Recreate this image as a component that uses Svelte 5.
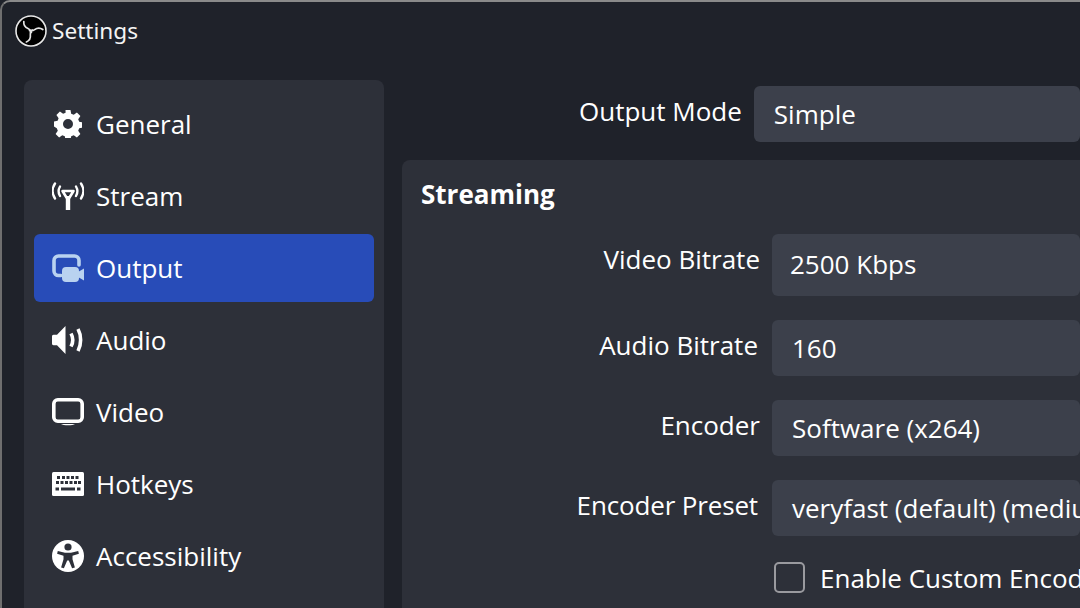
<script>
  const navItems = [
    { label: "General", icon: "gear" },
    { label: "Stream", icon: "antenna" },
    { label: "Output", icon: "output", active: true },
    { label: "Audio", icon: "speaker" },
    { label: "Video", icon: "monitor" },
    { label: "Hotkeys", icon: "keyboard" },
    { label: "Accessibility", icon: "person" }
  ];

  const fields = [
    { label: "Video Bitrate", value: "2500 Kbps", kind: "bitrate" },
    { label: "Audio Bitrate", value: "160", kind: "audio" },
    { label: "Encoder", value: "Software (x264)", kind: "encoder" },
    { label: "Encoder Preset", value: "veryfast (default) (medium CPU usage)", kind: "preset" }
  ];

  const armAngles = [0, 120, 240];
</script>

<div class="window">
  <header class="titlebar">
    <svg class="logo" viewBox="0 0 32 32" width="32" height="32">
      <circle cx="16" cy="16" r="15" fill="#000" stroke="#e8e8e8" stroke-width="1.600" />
      {#each armAngles as angle}
        <path
          transform="rotate({angle} 16 16)"
          d="M8.800 6.500C8.500 10 10.500 12.500 13 13.500 15 14.300 16 15.500 16.400 17.500"
          fill="none"
          stroke="#e4e4e4"
          stroke-width="1.700"
          stroke-linecap="round"
        />
      {/each}
    </svg>
    <span class="title">Settings</span>
  </header>

  <div class="body">
    <nav class="sidebar">
      {#each navItems as item}
        <div class="nav-item" class:active={item.active}>
          <span class="nav-icon">
            {#if item.icon === "gear"}
              <svg viewBox="0 0 28 28" width="28" height="28">
                <path fill-rule="evenodd" fill="#fff" d="M11.500 0h5l.7 3.800 2.500 1 3.200-2.200 3.500 3.500-2.200 3.200 1 2.500 3.800.7v5l-3.800.7-1 2.500 2.200 3.200-3.500 3.500-3.200-2.200-2.500 1-.7 3.800h-5l-.7-3.800-2.500-1-3.200 2.200-3.500-3.500 2.200-3.200-1-2.500L-.2 16.500v-5l3.800-.7 1-2.500L2.400 5.100 5.900 1.600l3.200 2.200 2.500-1zM14 9a5 5 0 1 0 0 10 5 5 0 0 0 0-10z" />
              </svg>
            {:else if item.icon === "antenna"}
              <svg viewBox="0 0 32 28" width="32" height="28" fill="none" stroke="#fff" stroke-linecap="round">
                <path d="M10.500 9h11l-4 6.500h-3z" stroke-width="2.600" stroke-linejoin="round" />
                <path d="M16 14v14" stroke-width="4.400" stroke-linecap="butt" />
                <path d="M8 4.500c-1.800 3-1.800 6.500 0 9.500" stroke-width="2.400" />
                <path d="M3 1.500c-3 4.500-3 10.500 0 15" stroke-width="2.400" />
                <path d="M24 4.500c1.800 3 1.800 6.500 0 9.500" stroke-width="2.400" />
                <path d="M29 1.500c3 4.500 3 10.500 0 15" stroke-width="2.400" />
              </svg>
            {:else if item.icon === "output"}
              <svg viewBox="0 0 32 28" width="32" height="28">
                <path d="M9 21.500H6.500a4.500 4.500 0 0 1-4.500-4.500V6.500A4.500 4.500 0 0 1 6.500 2h16A4.500 4.500 0 0 1 27 6.500V11" fill="none" stroke="#b9d2f0" stroke-width="3.600" stroke-linecap="round" />
                <rect x="10" y="13" width="17" height="15" rx="4" fill="#b9d2f0" />
                <path d="M26 18l6-3.500v12L26 23z" fill="#b9d2f0" />
              </svg>
            {:else if item.icon === "speaker"}
              <svg viewBox="0 0 32 28" width="32" height="28" fill="none" stroke="#fff">
                <path d="M0 10.500c0-1 .6-1.700 1.500-1.700H5L13.500 0v28L5 19.200H1.500C.6 19.200 0 18.500 0 17.500z" fill="#fff" stroke="none" />
                <path d="M19 7.500c2.200 4 2.200 9 0 13" stroke-width="3.600" />
                <path d="M26 3c3.500 6.500 3.500 15.500 0 22" stroke-width="3.600" />
              </svg>
            {:else if item.icon === "monitor"}
              <svg viewBox="0 0 32 28" width="32" height="28" fill="none">
                <rect x="1.800" y="1.800" width="28.400" height="21.400" rx="4" stroke="#fff" stroke-width="3.600" />
                <path d="M9 26h14c-2 1.800-12 1.800-14 0z" fill="#fff" />
              </svg>
            {:else if item.icon === "keyboard"}
              <svg viewBox="0 0 32 24" width="32" height="24">
                <rect width="32" height="24" rx="1.500" fill="#fff" />
                <path fill="#2d3039" d="M5 4h3v3H5zM10 4h3v3h-3zM14.500 4h3v3h-3zM19 4h3v3h-3zM23.500 4h3v3h-3zM4 9h3v3H4zM8.500 9h3v3h-3zM13 9h3v3h-3zM17.500 9h3v3h-3zM22 9h3v3h-3zM26 9h3v3h-3zM3.500 15.500h3.500v3H3.500zM9 15.500h14v3H9zM25 15.500h3.500v3H25z" />
              </svg>
            {:else if item.icon === "person"}
              <svg viewBox="0 0 32 32" width="32" height="32">
                <circle cx="16" cy="16" r="16" fill="#fff" />
                <circle cx="16" cy="7" r="3.600" fill="#2d3039" />
                <path d="M5.800 11l7.200 1.800h6l7.200-1.800.7 2.800-6.400 2v3.400l2.400 8.300-2.800.7-3.300-7.800h-1.600l-3.300 7.800-2.800-.7 2.400-8.300v-3.400l-6.400-2z" fill="#2d3039" />
              </svg>
            {/if}
          </span>
          <span class="nav-label">{item.label}</span>
        </div>
      {/each}
    </nav>

    <main class="content">
      <div class="mode-row">
        <span class="mode-label">Output Mode</span>
        <div class="combo mode-combo">Simple</div>
      </div>

      <section class="panel">
        <h2>Streaming</h2>
        <div class="fields">
          {#each fields as field}
            <div class="field field-{field.kind}">
              <span class="field-label">{field.label}</span>
              <div class="combo">{field.value}</div>
            </div>
          {/each}
          <label class="check-row">
            <span class="checkbox"></span>
            <span>Enable Custom Encoder Settings</span>
          </label>
        </div>
      </section>
    </main>
  </div>
</div>

<style>
  :global(body) {
    margin: 0;
    background: #1f222a;
    overflow: hidden;
  }
  .window {
    width: 1080px;
    height: 608px;
    box-sizing: border-box;
    background: #1f222a;
    border-top: 2px solid #8a8a8a;
    border-left: 2px solid #6f6f6f;
    border-top-left-radius: 10px;
    color: #fff;
    font-family: "Open Sans", sans-serif;
    font-size: 26px;
    overflow: hidden;
  }
  .titlebar {
    display: flex;
    align-items: center;
    gap: 5px;
    height: 58px;
    padding-left: 13px;
  }
  .logo {
    flex: none;
  }
  .title {
    margin-top: -2px;
    font-family: "Noto Sans", sans-serif;
    font-size: 22.600px;
    color: #f4f4f4;
  }
  .body {
    display: flex;
    align-items: flex-start;
    gap: 18px;
    padding: 20px 0 0 22px;
  }
  .sidebar {
    flex: none;
    box-sizing: border-box;
    width: 360px;
    height: 560px;
    padding: 10px;
    background: #2d3039;
    border-radius: 8px;
  }
  .nav-item {
    display: flex;
    align-items: center;
    height: 68px;
    margin-bottom: 4px;
    padding-left: 18px;
    border-radius: 6px;
    line-height: 1;
  }
  .nav-item.active {
    background: #284cb8;
  }
  .nav-icon {
    display: flex;
    justify-content: center;
    align-items: center;
    flex: none;
    width: 32px;
    margin-right: 12px;
  }
  .content {
    flex: 1;
    min-width: 0;
  }
  .mode-row {
    display: flex;
    gap: 12px;
    height: 56px;
    margin: 6px 0 18px;
    padding-left: 177px;
  }
  .mode-label {
    line-height: 50px;
  }
  .combo {
    flex: 1;
    box-sizing: border-box;
    min-width: 0;
    padding-left: 20px;
    background: #3c404b;
    border-radius: 6px;
    white-space: nowrap;
    overflow: hidden;
    line-height: 56px;
  }
  .panel {
    box-sizing: border-box;
    height: 470px;
    padding: 13px 0 0 19px;
    background: #2d3039;
    border-radius: 8px 0 0 0;
  }
  h2 {
    margin: 0;
    font-size: 26px;
    font-weight: 700;
    line-height: 42px;
  }
  .fields {
    display: flex;
    flex-direction: column;
    margin-top: 19px;
  }
  .field {
    display: flex;
    gap: 12px;
    height: 56px;
    margin-bottom: 24px;
  }
  .field-label {
    flex: none;
    width: 339px;
    text-align: right;
    line-height: 50px;
    white-space: nowrap;
  }
  .field-bitrate {
    height: 62px;
    margin-bottom: 24px;
  }
  .field-bitrate .combo {
    padding-left: 18px;
    line-height: 60px;
  }
  .field-audio .field-label,
  .field-preset .field-label {
    width: 337px;
    margin-right: 2px;
  }
  .field-preset .field-label {
    letter-spacing: -0.150px;
  }
  .check-row {
    display: flex;
    align-items: center;
    margin: 2px 0 0 353px;
    white-space: nowrap;
    line-height: 30px;
  }
  .checkbox {
    flex: none;
    box-sizing: border-box;
    width: 31px;
    height: 31px;
    margin-right: 15px;
    border: 2px solid #9a9a9f;
    border-radius: 5px;
  }
</style>
